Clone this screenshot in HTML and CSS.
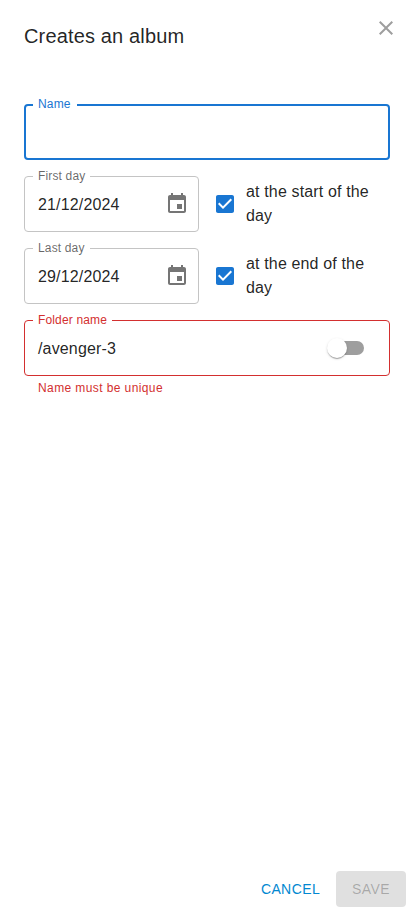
FILE: index.html
```html
<!DOCTYPE html>
<html lang="en">
<head>
<meta charset="utf-8">
<title>Creates an album</title>
<link rel="stylesheet" href="styles.css">
</head>
<body>
<div class="dialog">
  <header class="header">
    <h2 class="title">Creates an album</h2>
    <button class="close" aria-label="close"><svg viewBox="0 0 24 24"><path d="M19 6.41 17.59 5 12 10.59 6.41 5 5 6.41 10.59 12 5 17.59 6.41 19 12 13.41 17.59 19 19 17.59 13.41 12z"/></svg></button>
  </header>
  <main class="content">
    <fieldset class="field focused"><legend>Name</legend></fieldset>
    <div class="row">
      <fieldset class="field date"><legend>First day</legend><div class="control"><span>21/12/2024</span><svg class="calendar" viewBox="0 0 24 24"><path d="M17 12h-5v5h5v-5zM16 1v2H8V1H6v2H5c-1.11 0-1.99.9-1.99 2L3 19c0 1.1.89 2 2 2h14c1.1 0 2-.9 2-2V5c0-1.1-.9-2-2-2h-1V1h-2zm3 18H5V8h14v11z"/></svg></div></fieldset>
      <label class="check"><svg viewBox="0 0 24 24"><path d="M19 3H5c-1.11 0-2 .9-2 2v14c0 1.1.89 2 2 2h14c1.11 0 2-.9 2-2V5c0-1.1-.89-2-2-2zm-9 14l-5-5 1.41-1.41L10 14.17l7.59-7.59L19 8l-9 9z"/></svg><span>at the start of the day</span></label>
    </div>
    <div class="row">
      <fieldset class="field date"><legend>Last day</legend><div class="control"><span>29/12/2024</span><svg class="calendar" viewBox="0 0 24 24"><path d="M17 12h-5v5h5v-5zM16 1v2H8V1H6v2H5c-1.11 0-1.99.9-1.99 2L3 19c0 1.1.89 2 2 2h14c1.1 0 2-.9 2-2V5c0-1.1-.9-2-2-2h-1V1h-2zm3 18H5V8h14v11z"/></svg></div></fieldset>
      <label class="check"><svg viewBox="0 0 24 24"><path d="M19 3H5c-1.11 0-2 .9-2 2v14c0 1.1.89 2 2 2h14c1.11 0 2-.9 2-2V5c0-1.1-.89-2-2-2zm-9 14l-5-5 1.41-1.41L10 14.17l7.59-7.59L19 8l-9 9z"/></svg><span>at the end of the day</span></label>
    </div>
    <fieldset class="field error"><legend>Folder name</legend><div class="control"><span>/avenger-3</span><span class="switch"><span class="thumb"></span></span></div></fieldset>
    <p class="helper">Name must be unique</p>
  </main>
  <footer class="actions">
    <button class="btn cancel">CANCEL</button>
    <button class="btn save" disabled>SAVE</button>
  </footer>
</div>
</body>
</html>
```
FILE: styles.css
```css
* { box-sizing: border-box; }
body {
  margin: 0;
  font-family: "Liberation Sans", Arial, sans-serif;
  font-size: 16px;
  line-height: 24px;
  letter-spacing: 0.15px;
  color: rgba(0, 0, 0, 0.87);
  background: #fff;
}
button { font: inherit; border: 0; background: none; }
svg { display: block; width: 24px; height: 24px; fill: currentColor; flex: none; }
.dialog { display: flex; flex-direction: column; height: 915px; }
.header {
  display: flex;
  justify-content: space-between;
  align-items: flex-start;
  padding: 8px 8px 0 24px;
  height: 104px;
}
.title {
  margin: 12px 0 0;
  font-size: 20px;
  font-weight: 400;
  line-height: 32px;
  letter-spacing: 0.15px;
}
.close { padding: 8px; color: #9e9e9e; }
.content {
  flex: 1;
  display: flex;
  flex-direction: column;
  gap: 16px;
  padding: 0 24px;
}
.field {
  flex: none;
  width: 100%;
  min-width: 0;
  height: 61px;
  margin: -5px 0 0;
  padding: 0 9px 0 13px;
  border: 1px solid #c4c4c4;
  border-radius: 4px;
}
.field legend {
  height: 11px;
  margin-left: -5px;
  padding: 0 5px;
  font-size: 12px;
  line-height: 11px;
  color: rgba(0, 0, 0, 0.6);
}
.control {
  display: flex;
  align-items: center;
  justify-content: space-between;
  height: 46px;
}
.focused { border: 2px solid #1976d2; padding-left: 12px; }
.focused legend { padding-right: 6px; color: #1976d2; }
.error { border-color: #d32f2f; padding-right: 12px; }
.error legend { color: #d32f2f; }
.row { display: flex; gap: 5px; height: 56px; }
.row .field { width: 175px; }
.calendar { color: rgba(0, 0, 0, 0.54); margin-top: -2px; }
.check { display: flex; align-items: center; gap: 9px; padding-left: 9px; }
.check svg { color: #1976d2; }
.switch {
  display: flex;
  align-items: center;
  width: 34px;
  height: 14px;
  margin: -2px 13px 0 0;
  border-radius: 7px;
  background: #9e9e9e;
}
.thumb {
  width: 20px;
  height: 20px;
  flex: none;
  margin-left: -3px;
  border-radius: 50%;
  background: #fff;
  box-shadow: 0 2px 1px -1px rgba(0,0,0,.2), 0 1px 1px rgba(0,0,0,.14), 0 1px 3px rgba(0,0,0,.12);
}
.helper {
  margin: -14px 14px 0;
  font-size: 12px;
  line-height: 20px;
  letter-spacing: 0.4px;
  color: #d32f2f;
}
.actions { display: flex; justify-content: flex-end; gap: 8px; padding: 8px; }
.btn {
  height: 36px;
  padding: 6px 16px;
  border-radius: 4px;
  font-size: 14px;
  line-height: 24px;
  letter-spacing: 0.4px;
}
.cancel { padding: 6px 8px; color: #0288d1; }
.save { color: rgba(0, 0, 0, 0.26); background: rgba(0, 0, 0, 0.12); }
```
